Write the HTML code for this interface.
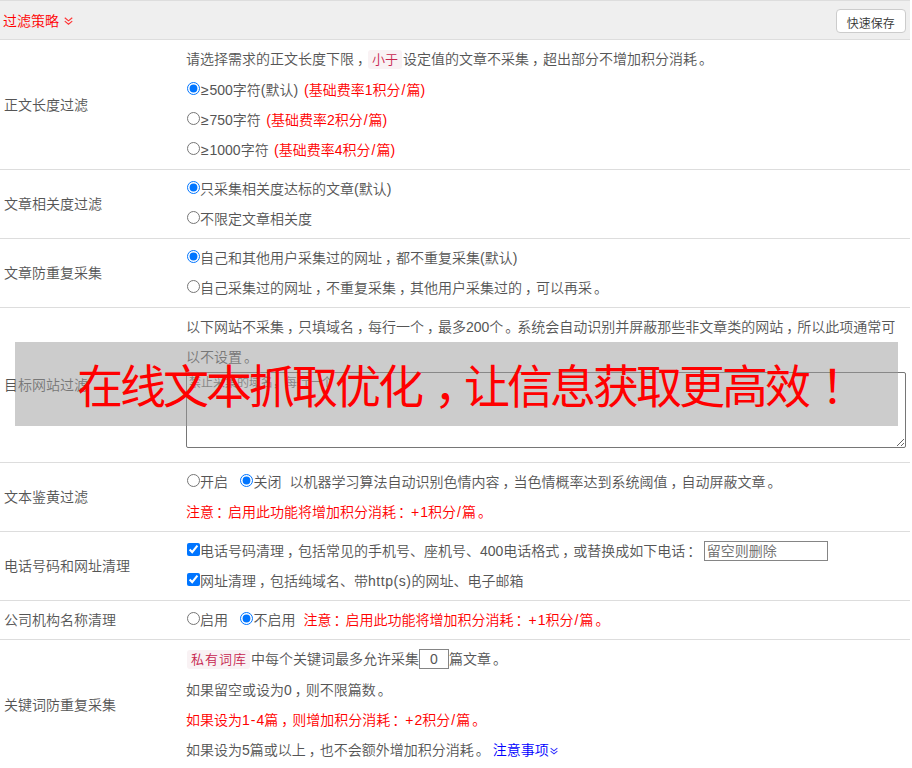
<!DOCTYPE html>
<html lang="zh-CN">
<head>
<meta charset="utf-8">
<title>过滤策略</title>
<style>
html,body{margin:0;padding:0;background:#fff;}
body{width:912px;height:768px;overflow:hidden;position:relative;font-family:"Liberation Sans","Noto Sans CJK SC",sans-serif;font-size:14px;color:#555;font-weight:350;}
table{border-collapse:collapse;width:910px;table-layout:fixed;}
td{padding:4px 4px;line-height:30px;border-bottom:1px solid #ddd;vertical-align:middle;white-space:nowrap;}

tr.h td{background:#efefef;border-top:1px solid #ddd;height:30px;line-height:30px;color:#f00;padding:5px 4px 3px 3px;}
.red{color:#f00;}
code{font-family:"Liberation Sans","Noto Sans CJK SC",sans-serif;font-size:13px;color:#c7254e;background:#f9f2f4;border-radius:3px;padding:2px 4px;}
input[type=radio],input[type=checkbox]{margin:0 .5px;width:13px;height:13px;vertical-align:.5px;accent-color:#0075ff;}
.btn{position:absolute;left:836px;top:9px;width:67.5px;height:21.5px;border:1px solid #ccc;border-radius:4px;background:#fff;color:#333;font-size:12px;line-height:28px;text-align:center;overflow:hidden;}
textarea{display:block;width:714px;height:69.5px;margin-top:0;margin-bottom:10.5px;border:1px solid #767676;border-radius:2px;padding:2px;font-family:inherit;font-size:12px;line-height:16px;resize:both;}
input.t{border:1px solid #858585;height:15.5px;padding:1px 2px;font-size:14px;font-family:inherit;color:#555;margin:0;vertical-align:0px;}
.ov{position:absolute;left:15px;top:342px;width:883px;height:84px;background:rgba(153,153,153,.5);}
.ovt{font-weight:400;position:absolute;left:77px;top:357px;font-size:46px;letter-spacing:-3px;line-height:60px;color:#f00;white-space:nowrap;}
.ge{display:inline-block;width:9.5px;text-align:center;}
i{font-style:normal;padding:0 1px;}
.c{position:relative;left:3px;}
.d{position:relative;left:2px;}
.sh{position:relative;left:13px;}
::placeholder{color:#757575;opacity:1;}
a{color:#00f;text-decoration:none;}
</style>
</head>
<body>
<table>
<colgroup><col style="width:182px"><col style="width:728px"></colgroup>
<tr class="h"><td colspan="2">过滤策略 <svg width="9" height="8" viewBox="0 0 10 9" style="vertical-align:1px;margin-left:1px"><path d="M0.8,0.8 L5,4.3 L9.2,0.8 M0.8,4.6 L5,8.1 L9.2,4.6" fill="none" stroke="#f33" stroke-width="1.3"/></svg></td></tr>
<tr><td class="l">正文长度过滤</td><td>请选择需求的正文长度下限<span class="c">，</span><code>小于</code><span style="margin-left:1px">设定值</span>的文章不采集<span class="c">，</span>超出部分不增加积分消耗<span class="d">。</span><br>
<input type="radio" checked><span class="ge">≥</span>500字符(默认) <span class="red" style="margin-left:2px">(基础费率1积分<i>/</i>篇)</span><br>
<input type="radio"><span class="ge">≥</span>750字符 <span class="red" style="margin-left:1.5px">(基础费率2积分<i>/</i>篇)</span><br>
<input type="radio"><span class="ge">≥</span>1000字符 <span class="red" style="margin-left:1.5px">(基础费率4积分<i>/</i>篇)</span></td></tr>
<tr><td class="l">文章相关度过滤</td><td><input type="radio" checked>只采集相关度达标的文章(默认)<br><input type="radio">不限定文章相关度</td></tr>
<tr><td class="l">文章防重复采集</td><td><input type="radio" checked>自己和其他用户采集过的网址<span class="c">，</span>都不重复采集(默认)<br><input type="radio">自己采集过的网址<span class="c">，</span>不重复采集<span class="c">，</span>其他用户采集过的<span class="c">，</span>可以再采<span class="d">。</span></td></tr>
<tr><td class="l">目标网站过滤</td><td style="white-space:normal">以下网站不采集<span class="c">，</span>只填域名<span class="c">，</span>每行一个<span class="c">，</span>最多200个<span class="d">。</span>系统会自动识别并屏蔽那些非文章类的网站<span class="c">，</span>所以此项通常可以不设置<span class="d">。</span><br>
<textarea placeholder="禁止采集的域名，每行一个"></textarea></td></tr>
<tr><td class="l">文本鉴黄过滤</td><td><input type="radio">开启<input type="radio" checked style="margin-left:12px">关闭<span style="margin-left:8px">以机器</span>学习算法自动识别色情内容<span class="c">，</span>当色情概率达到系统阈值<span class="c">，</span>自动屏蔽文章<span class="d">。</span><br><span class="red">注意<span class="d">：</span>启用此功能将增加积分消耗<span class="d">：</span><i>+</i>1积分<i>/</i>篇<span class="d">。</span></span></td></tr>
<tr><td class="l">电话号码和网址清理</td><td><input type="checkbox" checked>电话号码清理<span class="c">，</span>包括常见的手机号、座机号、400电话格式<span class="c">，</span>或替换成如下电话<span class="d">：</span><input class="t" type="text" placeholder="留空则删除" style="width:118px;margin-left:4.5px"><br><input type="checkbox" checked>网址清理<span class="c">，</span>包括纯域名、带<span style="letter-spacing:.55px">http(s)</span>的网址、电子邮箱</td></tr>
<tr><td class="l">公司机构名称清理</td><td><input type="radio">启用<input type="radio" checked style="margin-left:12px">不启用<span class="red" style="margin-left:8px">注意<span class="d">：</span>启用此功能将增加积分消耗<span class="d">：</span><i>+</i>1积分<i>/</i>篇<span class="d">。</span></span></td></tr>
<tr><td class="l">关键词防重复采集</td><td><code style="letter-spacing:1px;padding-right:3px;margin-left:1px">私有词库</code><span style="margin-left:1px">中每个</span>关键词最多允许采集<input class="t" type="text" value="0" style="width:24px;text-align:center">篇文章<span class="d">。</span><br>如果留空或设为0<span class="c">，</span>则不限篇数<span class="d">。</span><br><span class="red">如果设为1<i>-</i>4篇<span class="c">，</span>则增加积分消耗<span class="d">：</span><i>+</i>2积分<i>/</i>篇<span class="d">。</span></span><br>如果设为5篇或以上<span class="c">，</span>也不会额外增加积分消耗<span class="d">。</span><a style="margin-left:5px">注意事项<svg width="8" height="8" viewBox="0 0 10 9" style="vertical-align:0px;margin-left:1px"><path d="M0.8,0.8 L5,4.3 L9.2,0.8 M0.8,4.6 L5,8.1 L9.2,4.6" fill="none" stroke="#33f" stroke-width="1.3"/></svg></a></td></tr>
</table>
<div class="btn">快速保存</div>
<div class="ov"></div>
<div class="ovt">在线文本抓取优化<span class="sh">，</span>让信息获取更高效<span class="sh">！</span></div>
</body>
</html>
